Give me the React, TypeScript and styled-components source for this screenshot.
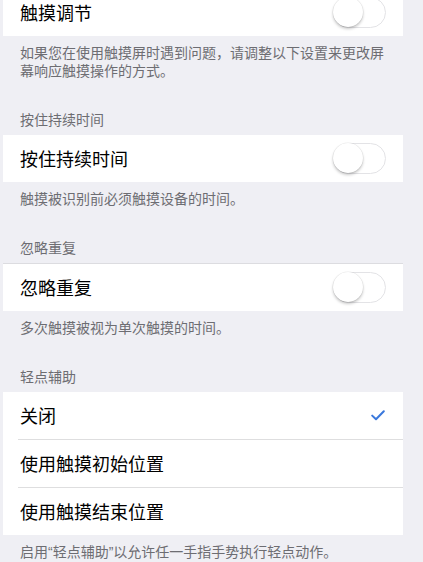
import React from "react";
import styled, { createGlobalStyle } from "styled-components";

const Global = createGlobalStyle`
  html, body {
    margin: 0;
    padding: 0;
    background: #efeff4;
    overflow: hidden;
  }
  body {
    font-family: "Liberation Sans", "Noto Sans CJK SC", sans-serif;
    -webkit-font-smoothing: antialiased;
  }
`;

const Page = styled.div`
  width: 423px;
  height: 562px;
  overflow: hidden;
  box-sizing: border-box;
  padding: 0 20px 0 3px;
  background: #efeff4;
`;

const Scroll = styled.div`
  margin-top: -11px;
  display: flex;
  flex-direction: column;
`;

const Section = styled.section`
  display: flex;
  flex-direction: column;
`;

const Header = styled.div`
  padding: 23px 17px 6px;
  font-size: 14px;
  line-height: 18px;
  color: #6d6d72;
`;

const Card = styled.div<{ $topBorder?: boolean }>`
  background: #ffffff;
  display: flex;
  flex-direction: column;
  border-top: ${(p) => (p.$topBorder ? "1px solid #dcdce0" : "none")};
`;

const Row = styled.div<{ $sep?: boolean }>`
  position: relative;
  height: 47px;
  display: flex;
  align-items: center;
  justify-content: space-between;
  padding: 0 17px;
  border-top: ${(p) => (p.$sep ? "1px solid #dededf" : "none")};
  margin-left: ${(p) => (p.$sep ? "15px" : "0")};
  padding-left: ${(p) => (p.$sep ? "2px" : "17px")};
`;

const Label = styled.span`
  font-size: 18px;
  line-height: 22px;
  color: #000;
  padding-top: 3px;
`;

const Footer = styled.div`
  padding: 8px 17px 8px;
  font-size: 14px;
  line-height: 18px;
  color: #6d6d72;
`;

const SwitchTrack = styled.div`
  width: 53px;
  height: 31px;
  box-sizing: border-box;
  border-radius: 16px;
  border: 1.5px solid #e3e3e6;
  background: #fff;
  position: relative;
`;

const Knob = styled.div`
  position: absolute;
  left: -1px;
  top: -1px;
  width: 30px;
  height: 30px;
  border-radius: 50%;
  background: #fff;
  box-shadow: 0 2px 3px rgba(0, 0, 0, 0.22), 0 0 0 0.5px rgba(0, 0, 0, 0.08);
`;

const Switch = () => (
  <SwitchTrack>
    <Knob />
  </SwitchTrack>
);

const Check = () => (
  <svg width="14" height="11" viewBox="0 0 14 11" style={{ marginRight: 1 }}>
    <path
      d="M1.2 5.6 L5 9.3 L12.8 1.3"
      fill="none"
      stroke="#3a78dc"
      strokeWidth="2"
      strokeLinecap="round"
      strokeLinejoin="round"
    />
  </svg>
);

export default function App() {
  return (
    <Page>
      <Global />
      <Scroll>
        <Section>
          <Card>
            <Row>
              <Label>触摸调节</Label>
              <Switch />
            </Row>
          </Card>
          <Footer>
            如果您在使用触摸屏时遇到问题，请调整以下设置来更改屏幕响应触摸操作的方式。
          </Footer>
        </Section>
        <Section>
          <Header>按住持续时间</Header>
          <Card>
            <Row>
              <Label>按住持续时间</Label>
              <Switch />
            </Row>
          </Card>
          <Footer>触摸被识别前必须触摸设备的时间。</Footer>
        </Section>
        <Section>
          <Header>忽略重复</Header>
          <Card $topBorder>
            <Row>
              <Label>忽略重复</Label>
              <Switch />
            </Row>
          </Card>
          <Footer>多次触摸被视为单次触摸的时间。</Footer>
        </Section>
        <Section>
          <Header>轻点辅助</Header>
          <Card>
            <Row>
              <Label>关闭</Label>
              <Check />
            </Row>
            <Row $sep>
              <Label>使用触摸初始位置</Label>
            </Row>
            <Row $sep>
              <Label>使用触摸结束位置</Label>
            </Row>
          </Card>
          <Footer>启用“轻点辅助”以允许任一手指手势执行轻点动作。</Footer>
        </Section>
      </Scroll>
    </Page>
  );
}
